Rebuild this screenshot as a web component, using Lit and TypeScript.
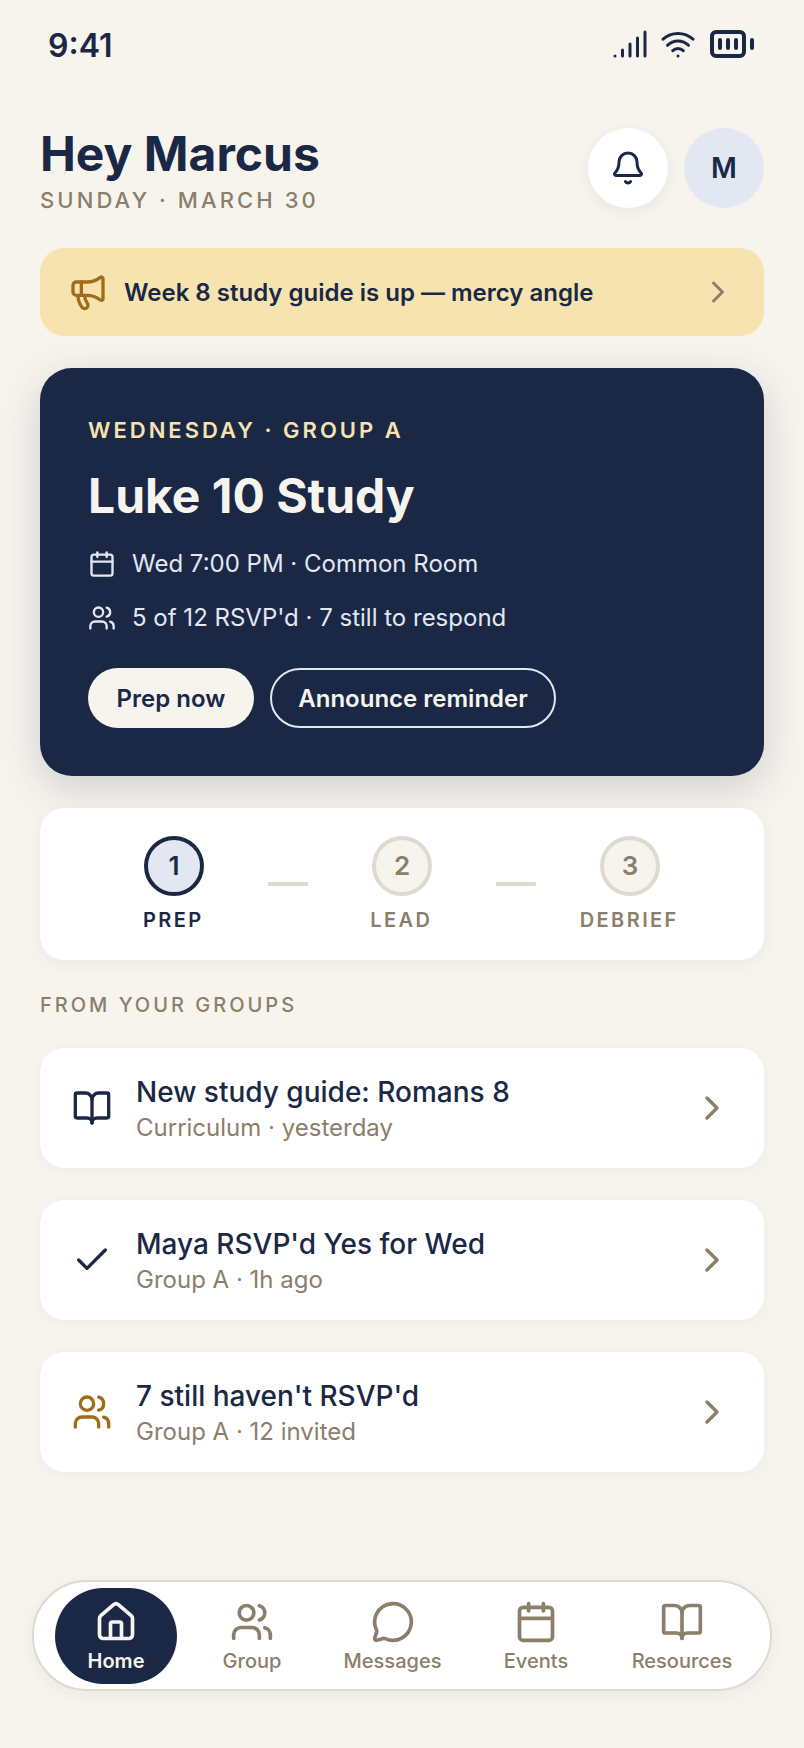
import { LitElement, html, css, svg } from "lit";
import { customElement } from "lit/decorators.js";

const paths = {
  signal: svg`<path d="M2 20h.01"/><path d="M7 20v-4"/><path d="M12 20v-8"/><path d="M17 20V8"/><path d="M22 4v16"/>`,
  wifi: svg`<path d="M12 20h.01"/><path d="M2 8.82a15 15 0 0 1 20 0"/><path d="M5 12.859a10 10 0 0 1 14 0"/><path d="M8.5 16.429a5 5 0 0 1 7 0"/>`,
  battery: svg`<path d="M10 10v4"/><path d="M14 10v4"/><path d="M22 14v-4"/><path d="M6 10v4"/><rect x="2" y="6" width="16" height="12" rx="2"/>`,
  bell: svg`<path d="M10.268 21a2 2 0 0 0 3.464 0"/><path d="M3.262 15.326A1 1 0 0 0 4 17h16a1 1 0 0 0 .74-1.673C19.41 13.956 18 12.499 18 8A6 6 0 0 0 6 8c0 4.499-1.411 5.956-2.738 7.326"/>`,
  megaphone: svg`<path d="M11 6a13 13 0 0 0 8.4-2.8A1 1 0 0 1 21 4v12a1 1 0 0 1-1.6.8A13 13 0 0 0 11 14H5a2 2 0 0 1-2-2V8a2 2 0 0 1 2-2z"/><path d="M6 14a12 12 0 0 0 2.4 7.2 2 2 0 0 0 3.2-2.4A8 8 0 0 1 10 14"/><path d="M8 6v8"/>`,
  chevron: svg`<path d="m9 18 6-6-6-6"/>`,
  calendar: svg`<path d="M8 2v4"/><path d="M16 2v4"/><rect width="18" height="18" x="3" y="4" rx="2"/><path d="M3 10h18"/>`,
  users: svg`<path d="M16 21v-2a4 4 0 0 0-4-4H6a4 4 0 0 0-4 4v2"/><path d="M16 3.128a4 4 0 0 1 0 7.744"/><path d="M22 21v-2a4 4 0 0 0-3-3.87"/><circle cx="9" cy="7" r="4"/>`,
  book: svg`<path d="M12 7v14"/><path d="M3 18a1 1 0 0 1-1-1V4a1 1 0 0 1 1-1h5a4 4 0 0 1 4 4 4 4 0 0 1 4-4h5a1 1 0 0 1 1 1v13a1 1 0 0 1-1 1h-6a3 3 0 0 0-3 3 3 3 0 0 0-3-3z"/>`,
  check: svg`<path d="M20 6 9 17l-5-5"/>`,
  home: svg`<path d="M15 21v-8a1 1 0 0 0-1-1h-4a1 1 0 0 0-1 1v8"/><path d="M3 10a2 2 0 0 1 .709-1.528l7-5.999a2 2 0 0 1 2.582 0l7 5.999A2 2 0 0 1 21 10v9a2 2 0 0 1-2 2H5a2 2 0 0 1-2-2z"/>`,
  message: svg`<path d="M2.992 16.342a2 2 0 0 1 .094 1.167l-1.065 3.29a1 1 0 0 0 1.236 1.168l3.413-.998a2 2 0 0 1 1.099.092 10 10 0 1 0-4.777-4.719"/>`,
};
type IconName = keyof typeof paths;

const icon = (name: IconName, cls: string) => html`<svg class="ic ${cls}" viewBox="0 0 24 24" fill="none" stroke="currentColor" stroke-width="2" stroke-linecap="round" stroke-linejoin="round" aria-hidden="true">${paths[name]}</svg>`;

@customElement("app-root")
export class AppRoot extends LitElement {
  static styles = css`
    :host {
      display: flex;
      flex-direction: column;
      min-height: 1748px;
      background: #f7f4ee;
      color: #1a2846;
      font-family: Inter, "Liberation Sans", sans-serif;
    }
    .ic { display: block; flex: none; }
    .s28 { width: 28px; height: 28px; }
    .s36 { width: 36px; height: 36px; }
    .s40 { width: 40px; height: 40px; }
    .s44 { width: 44px; height: 44px; }
    .s48 { width: 48px; height: 48px; }
    .status {
      height: 88px;
      padding: 2px 48px 0;
      box-sizing: border-box;
      display: flex;
      align-items: center;
      justify-content: space-between;
    }
    .time { font-size: 32px; font-weight: 600; }
    .status-icons { display: flex; align-items: center; gap: 12px; margin-top: -2px; }
    .main {
      padding: 40px 40px 0;
      display: flex;
      flex-direction: column;
    }
    .head {
      display: flex;
      align-items: flex-start;
      justify-content: space-between;
    }
    h1 {
      margin: 2px 0 0;
      font-size: 48px;
      line-height: 48px;
      font-weight: 700;
    }
    .date {
      margin-top: 8px;
      font-size: 22px;
      line-height: 28px;
      font-weight: 500;
      letter-spacing: 3.1px;
      color: #8b7e6a;
    }
    .head-btns { display: flex; gap: 16px; }
    .circle {
      width: 80px;
      height: 80px;
      border-radius: 50%;
      display: flex;
      align-items: center;
      justify-content: center;
    }
    .bell { background: #fff; box-shadow: 0 4px 16px rgba(26, 40, 70, 0.06); }
    .avatar { background: #e3e7f2; font-size: 28px; font-weight: 600; }
    .banner {
      margin-top: 34px;
      height: 88px;
      box-sizing: border-box;
      padding: 0 28px;
      border-radius: 24px;
      background: #f7e3b0;
      display: flex;
      align-items: center;
      gap: 16px;
      font-size: 24px;
      font-weight: 600;
    }
    .banner .text { flex: 1; }
    .gold { color: #a06c1a; }
    .muted { color: #8b7e6a; }
    .hero {
      margin-top: 32px;
      padding: 48px;
      border-radius: 32px;
      background: #1a2846;
      color: #f7f4ee;
      box-shadow: 0 12px 40px rgba(26, 40, 70, 0.18);
    }
    .kicker {
      font-size: 22px;
      line-height: 28px;
      font-weight: 600;
      letter-spacing: 3px;
      color: #f7e3b0;
    }
    h2 {
      margin: 23px 0 0;
      font-size: 48px;
      line-height: 58px;
      font-weight: 700;
    }
    .facts { margin-top: 21px; display: flex; flex-direction: column; gap: 18px; }
    .fact {
      display: flex;
      align-items: center;
      gap: 16px;
      font-size: 24px;
      line-height: 36px;
      color: #e3e7f2;
    }
    .actions { margin-top: 32px; display: flex; gap: 16px; }
    .btn {
      height: 60px;
      box-sizing: border-box;
      border-radius: 30px;
      padding: 0 28.5px;
      display: flex;
      align-items: center;
      font-size: 24px;
      font-weight: 600;
    }
    .btn.solid { background: #f7f4ee; color: #1a2846; }
    .btn.line { border: 2px solid #e3e7f2; color: #f7f4ee; padding: 0 26.5px; }
    .steps {
      margin-top: 32px;
      padding: 28px 40px;
      background: #fff;
      border-radius: 24px;
      box-shadow: 0 4px 16px rgba(26, 40, 70, 0.05);
      display: flex;
      align-items: center;
    }
    .step {
      flex: 1;
      display: flex;
      flex-direction: column;
      align-items: center;
      gap: 12px;
      font-size: 20px;
      line-height: 24px;
      font-weight: 600;
      letter-spacing: 2.4px;
      color: #8b7e6a;
    }
    .step-label { margin-left: -1.5px; }
    .num {
      width: 60px;
      height: 60px;
      box-sizing: border-box;
      border-radius: 50%;
      border: 4px solid #dedad0;
      background: #f7f4ee;
      display: flex;
      align-items: center;
      justify-content: center;
      font-size: 26px;
      font-weight: 600;
      letter-spacing: 0;
    }
    .step.on { color: #1a2846; }
    .step.on .num { border-color: #1a2846; background: #e3e7f2; }
    .dash { width: 40px; height: 4px; background: #dedad0; flex: none; }
    .section {
      margin-top: 33px;
      font-size: 20px;
      line-height: 24px;
      font-weight: 500;
      letter-spacing: 3px;
      color: #8b7e6a;
    }
    .list { margin-top: 31px; display: flex; flex-direction: column; gap: 32px; }
    .row {
      height: 120px;
      box-sizing: border-box;
      padding: 0 32px;
      background: #fff;
      border-radius: 24px;
      box-shadow: 0 2px 12px rgba(26, 40, 70, 0.04);
      display: flex;
      align-items: center;
      gap: 24px;
    }
    .row .body { flex: 1; min-width: 0; padding-top: 2px; }
    .row .title { font-size: 28px; line-height: 36px; font-weight: 500; }
    .row .sub { margin-top: 2px; font-size: 24px; line-height: 32px; color: #8b7e6a; }
    .nav {
      margin: auto 32px 57px;
      height: 111px;
      box-sizing: border-box;
      padding: 6px 21px 5px;
      background: #fff;
      border: 2px solid #dedad0;
      border-radius: 55px;
      box-shadow: 0 4px 16px rgba(26, 40, 70, 0.05);
      display: grid;
      grid-template-columns: 122px 122px 131px 128px 136px;
      gap: 14px;
    }
    .tab {
      border-radius: 48px;
      display: flex;
      flex-direction: column;
      align-items: center;
      justify-content: center;
      gap: 4px;
      padding-top: 2px;
      font-size: 20px;
      line-height: 26px;
      font-weight: 500;
      color: #8b7e6a;
    }
    .tab.on { background: #1a2846; color: #f7f4ee; font-weight: 600; }
  `;

  render() {
    const steps = [
      { n: "1", label: "PREP", on: true },
      { n: "2", label: "LEAD", on: false },
      { n: "3", label: "DEBRIEF", on: false },
    ];
    const rows: { icon: IconName; cls: string; title: string; sub: string }[] = [
      { icon: "book", cls: "", title: "New study guide: Romans 8", sub: "Curriculum · yesterday" },
      { icon: "check", cls: "", title: "Maya RSVP'd Yes for Wed", sub: "Group A · 1h ago" },
      { icon: "users", cls: "gold", title: "7 still haven't RSVP'd", sub: "Group A · 12 invited" },
    ];
    const tabs: { icon: IconName; label: string; on?: boolean }[] = [
      { icon: "home", label: "Home", on: true },
      { icon: "users", label: "Group" },
      { icon: "message", label: "Messages" },
      { icon: "calendar", label: "Events" },
      { icon: "book", label: "Resources" },
    ];
    return html`
      <div class="status">
        <span class="time">9:41</span>
        <div class="status-icons">
          ${icon("signal", "s36")}${icon("wifi", "s36")}${icon("battery", "s48")}
        </div>
      </div>
      <div class="main">
        <div class="head">
          <div>
            <h1>Hey Marcus</h1>
            <div class="date">SUNDAY · MARCH 30</div>
          </div>
          <div class="head-btns">
            <div class="circle bell">${icon("bell", "s36")}</div>
            <div class="circle avatar">M</div>
          </div>
        </div>
        <div class="banner">
          <span class="gold">${icon("megaphone", "s40")}</span>
          <span class="text">Week 8 study guide is up — mercy angle</span>
          <span class="muted">${icon("chevron", "s36")}</span>
        </div>
        <div class="hero">
          <div class="kicker">WEDNESDAY · GROUP A</div>
          <h2>Luke 10 Study</h2>
          <div class="facts">
            <div class="fact">${icon("calendar", "s28")}Wed 7:00 PM · Common Room</div>
            <div class="fact">${icon("users", "s28")}5 of 12 RSVP'd · 7 still to respond</div>
          </div>
          <div class="actions">
            <div class="btn solid">Prep now</div>
            <div class="btn line">Announce reminder</div>
          </div>
        </div>
        <div class="steps">
          ${steps.map(
            (s, i) => html`
              ${i > 0 ? html`<div class="dash"></div>` : ""}
              <div class="step ${s.on ? "on" : ""}">
                <div class="num">${s.n}</div>
                <div class="step-label">${s.label}</div>
              </div>
            `
          )}
        </div>
        <div class="section">FROM YOUR GROUPS</div>
        <div class="list">
          ${rows.map(
            (r) => html`
              <div class="row">
                <span class=${r.cls}>${icon(r.icon, "s40")}</span>
                <div class="body">
                  <div class="title">${r.title}</div>
                  <div class="sub">${r.sub}</div>
                </div>
                <span class="muted">${icon("chevron", "s40")}</span>
              </div>
            `
          )}
        </div>
      </div>
      <div class="nav">
        ${tabs.map(
          (t) => html`
            <div class="tab ${t.on ? "on" : ""}">
              ${icon(t.icon, "s44")}
              <span>${t.label}</span>
            </div>
          `
        )}
      </div>
    `;
  }
}
